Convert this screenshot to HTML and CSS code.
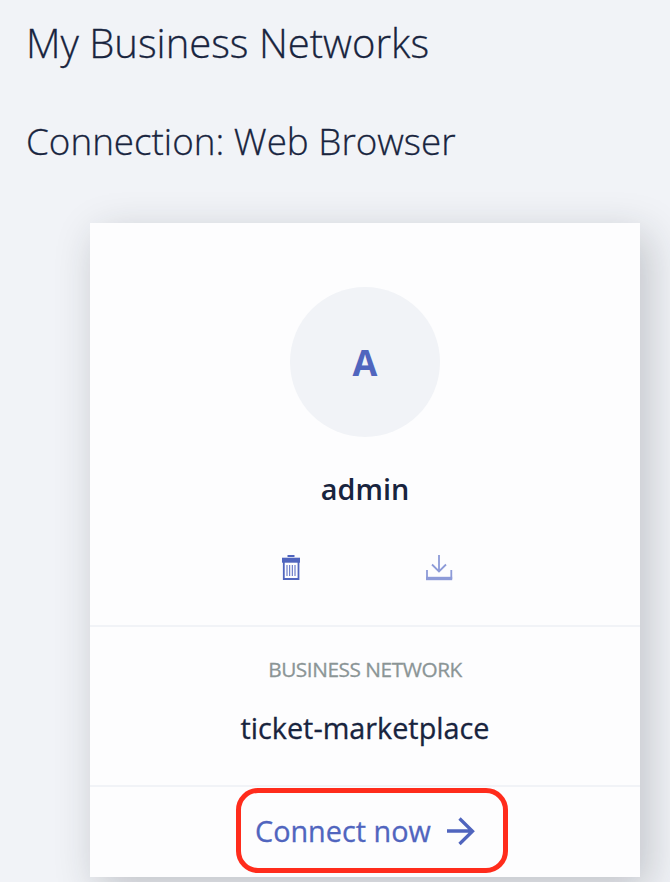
FILE: index.html
```html
<!DOCTYPE html>
<html lang="en">
<head>
<meta charset="utf-8">
<title>My Business Networks</title>
<link rel="stylesheet" href="styles.css">
</head>
<body>
<main class="page">
  <h1 class="title">My Business Networks</h1>
  <h2 class="subtitle">Connection: Web Browser</h2>
  <article class="card">
    <section class="identity">
      <div class="avatar">A</div>
      <h3 class="name">admin</h3>
      <div class="actions">
        <svg class="trash" width="20" height="28" viewBox="0 0 20 28" fill="none" stroke="#5065be">
          <path d="M6.500 2h7" stroke-width="2"/>
          <path d="M1 6.200h18" stroke-width="5"/>
          <path d="M2.800 7v18h14.700V7" stroke-width="1.800"/>
          <path d="M6 11v11M8.700 11v11M11.300 11v11M14 11v11" stroke-width="1"/>
        </svg>
        <svg class="download" width="28" height="28" viewBox="0 0 28 28" fill="none" stroke="#8d9bd8" stroke-width="1.800">
          <path d="M14 1v16M7 10.500l7 7 7-7"/>
          <path d="M2 16v9M26.300 16v9"/>
          <path d="M1 24.500h26.200" stroke-width="3.400"/>
        </svg>
      </div>
    </section>
    <section class="network">
      <div class="label">BUSINESS NETWORK</div>
      <div class="network-name">ticket-marketplace</div>
    </section>
    <footer class="footer">
      <div class="connect">
        <span>Connect now</span>
        <svg width="30" height="30" viewBox="0 0 30 30" fill="none" stroke="#5065be" stroke-width="3.300">
          <path d="M1 15h26M13.500 2.500L26.500 15.200 13.500 28"/>
        </svg>
      </div>
    </footer>
  </article>
</main>
</body>
</html>
```
FILE: styles.css
```css
* { box-sizing: border-box; }
body { margin: 0; background: #f1f3f7; color: #18243e; font-family: "Open Sans", sans-serif; }
.page { height: 882px; overflow: hidden; padding: 15px 30px 0 26px; }
h1, h2, h3 { margin: 0; }
.title, .subtitle { font-weight: 300; line-height: 56px; white-space: nowrap; -webkit-text-stroke: .3px; }
.title { font-size: 40px; }
.subtitle { margin-top: 42px; font-size: 36.8px; }
.card { width: 550px; height: 654px; margin: 54px 0 0 64px; background: #fdfdfe; box-shadow: 8px 12px 40px rgba(30, 34, 42, .23); }
.identity { height: 404px; padding-top: 64px; display: flex; flex-direction: column; align-items: center; border-bottom: 2px solid #f1f3f7; }
.avatar { width: 150px; height: 150px; border-radius: 50%; background: #f1f3f7; color: #5065be; font-size: 36px; font-weight: 700; line-height: 152px; text-align: center; }
.name { margin-top: 32px; font-size: 28.8px; font-weight: 600; line-height: 40px; }
.actions { display: flex; gap: 124px; margin-top: 45px; padding-left: 3px; }
.network { height: 160px; padding-top: 28px; text-align: center; border-bottom: 2px solid #f1f3f7; }
.label { color: #8b9596; font-size: 20.8px; letter-spacing: -.45px; line-height: 29px; -webkit-text-stroke: .3px; }
.network-name { margin-top: 25px; font-size: 28.8px; line-height: 38px; -webkit-text-stroke: .3px; }
.footer { padding: 1px 0 0 146px; }
.connect { width: 272px; height: 85px; padding-left: 14px; display: flex; align-items: center; gap: 15px; border: 5px solid #ff2c1c; border-radius: 22px; color: #5065be; font-size: 28.8px; -webkit-text-stroke: .3px; }
```
